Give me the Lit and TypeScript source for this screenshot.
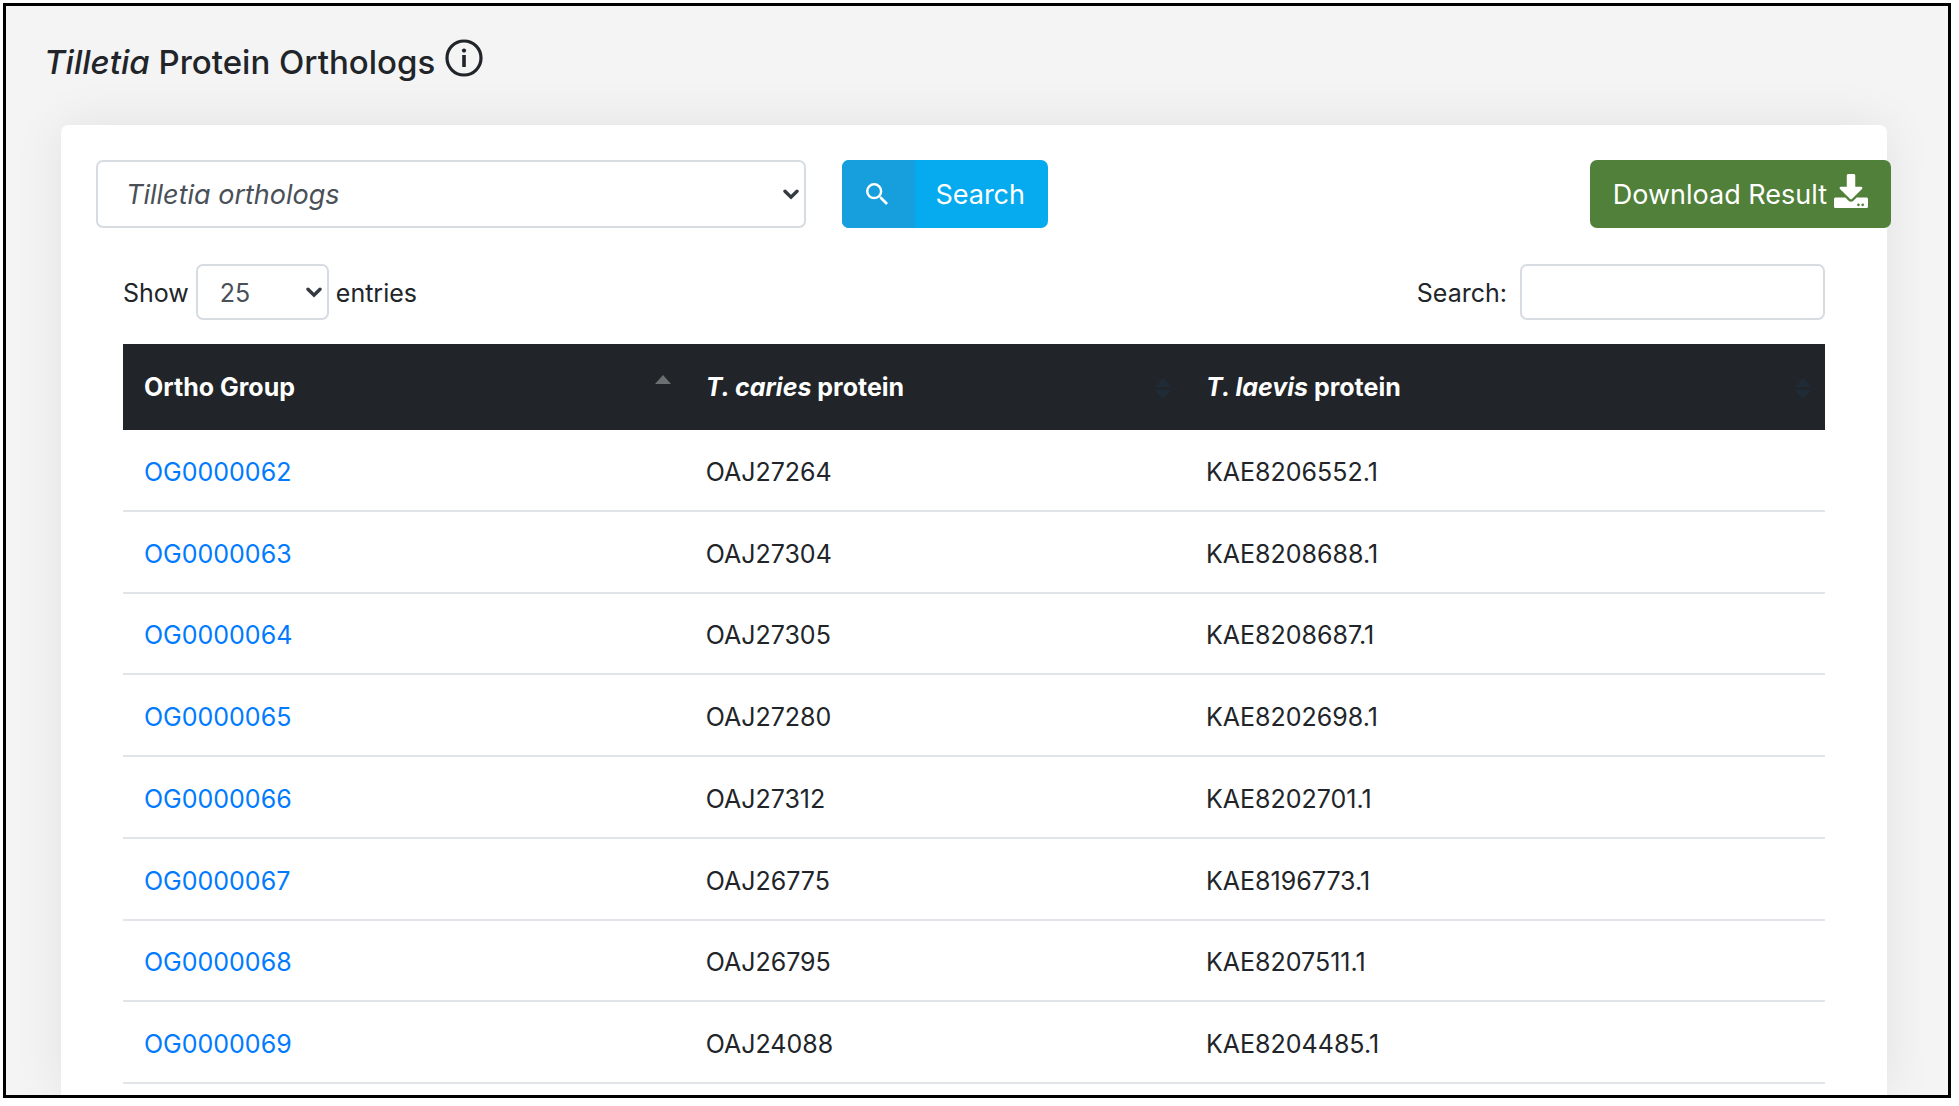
import { LitElement, html, css, svg } from "lit";
import { customElement, state } from "lit/decorators.js";

interface Ortholog {
  group: string;
  caries: string;
  laevis: string;
}

const ROWS: Ortholog[] = [
  { group: "OG0000062", caries: "OAJ27264", laevis: "KAE8206552.1" },
  { group: "OG0000063", caries: "OAJ27304", laevis: "KAE8208688.1" },
  { group: "OG0000064", caries: "OAJ27305", laevis: "KAE8208687.1" },
  { group: "OG0000065", caries: "OAJ27280", laevis: "KAE8202698.1" },
  { group: "OG0000066", caries: "OAJ27312", laevis: "KAE8202701.1" },
  { group: "OG0000067", caries: "OAJ26775", laevis: "KAE8196773.1" },
  { group: "OG0000068", caries: "OAJ26795", laevis: "KAE8207511.1" },
  { group: "OG0000069", caries: "OAJ24088", laevis: "KAE8204485.1" },
];

const chevron = html`<svg class="chevron" viewBox="0 0 16 11" width="16" height="11" aria-hidden="true">
  <path d="M2 2.2 8 8.2 14 2.2" fill="none" stroke="currentColor" stroke-width="3.4" stroke-linecap="round" stroke-linejoin="miter" />
</svg>`;

const sortIcon = (active: boolean) => html`<svg class="sort" viewBox="0 0 16 30" width="16" height="30" aria-hidden="true">
  ${active
    ? svg`<path d="M8 3 16 12H0z" fill="#6b6f72" />`
    : svg`<path d="M8 6 16 15H0zM0 18H16L8 27z" fill="#1f2c38" />`}
</svg>`;

@customElement("app-root")
export class AppRoot extends LitElement {
  @state() private filter = "";

  static styles = css`
    :host {
      display: block;
      box-sizing: border-box;
      height: 100vh;
      padding: 3px 8px 8px 3px;
      background: #fff;
      color: #212529;
      font: 400 25px/36px Inter, "Liberation Sans", sans-serif;
    }
    *, *::before, *::after { box-sizing: border-box; }
    .frame {
      display: flex;
      flex-direction: column;
      height: 100%;
      overflow: hidden;
      border: 3px solid #000;
      background: #f4f4f4;
    }
    .heading {
      display: flex;
      align-items: center;
      gap: 10px;
      margin: 0;
      padding: 32px 38px 39px;
      font-size: 33px;
      line-height: 48px;
      font-weight: 500;
    }
    .info {
      display: flex;
      margin: 0 0 8px;
      padding: 0;
      border: 0;
      background: none;
      color: inherit;
    }
    .card {
      flex: 1;
      display: flex;
      flex-direction: column;
      margin: 0 61px 0 55px;
      padding: 35px 0 11px;
      border-radius: 7px 7px 0 0;
      background: #fff;
      box-shadow: 0 0 50px rgba(0, 0, 0, 0.08);
    }
    .toolbar {
      display: grid;
      grid-template-columns: 710fr 1048fr;
      gap: 36px;
      margin: 0 -4px 36px 35px;
    }
    .actions { display: flex; justify-content: space-between; }
    .picker { display: grid; align-items: center; color: #343a40; }
    .picker > * { grid-area: 1 / 1; }
    .chevron { justify-self: end; margin-right: 7px; pointer-events: none; }
    select, input {
      margin: 0;
      border: 2px solid #d6dce2;
      border-radius: 7px;
      background: #fff;
      color: #495057;
      font: inherit;
      appearance: none;
    }
    .dataset {
      width: 100%;
      height: 68px;
      padding: 2px 28px 0;
      font-size: 27px;
      font-style: italic;
    }
    .btn {
      display: flex;
      align-items: center;
      height: 68px;
      padding: 0;
      border: 0;
      border-radius: 7px;
      overflow: hidden;
      color: #fff;
      font: inherit;
      font-size: 27px;
      white-space: nowrap;
    }
    .go { background: #05abee; }
    .go-icon {
      display: flex;
      align-items: center;
      justify-content: center;
      width: 73px;
      height: 100%;
      background: #179fdd;
    }
    .go-icon svg { margin-right: 4px; }
    .go-text { padding: 2px 23px 0 20px; }
    .download { gap: 7px; padding: 2px 23px 0; background: #508039; }
    .download svg { margin-bottom: 8px; }
    .controls {
      display: flex;
      justify-content: space-between;
      margin: 0 62px 24px;
    }
    .controls label { display: flex; align-items: center; gap: 7px; }
    .controls .find { gap: 13px; }
    .controls .caption { padding-top: 2px; }
    .length { width: 133px; height: 56px; padding: 2px 22px 0; }
    .query { width: 305px; height: 56px; padding: 0 12px; }
    .grid {
      flex: 1;
      display: flex;
      margin: 0 62px;
    }
    table {
      width: 100%;
      height: 100%;
      table-layout: fixed;
      border-spacing: 0;
    }
    .c1 { width: 33%; }
    .c2 { width: 29.4%; }
    th { height: 86px; padding: 0; background: #212529; text-align: left; }
    th button {
      display: flex;
      align-items: center;
      justify-content: space-between;
      width: 100%;
      padding: 0 14px 0 21px;
      border: 0;
      background: none;
      color: #fff;
      font: inherit;
      font-weight: 700;
      text-align: left;
    }
    td { padding: 4px 21px 0; border-bottom: 2px solid #e1e5e9; }
    a { color: #007bff; text-decoration: none; }
  `;

  private onInput(e: Event) {
    this.filter = (e.target as HTMLInputElement).value;
  }

  render() {
    const term = this.filter.toLowerCase();
    const rows = ROWS.filter((r) => `${r.group} ${r.caries} ${r.laevis}`.toLowerCase().includes(term));
    return html`
      <main class="frame">
        <h1 class="heading">
          <span><em>Tilletia</em> Protein Orthologs</span>
          <button class="info" type="button" aria-label="Information">
            <svg viewBox="0 0 38 38" width="38" height="38" fill="none" aria-hidden="true">
              <circle cx="19" cy="19" r="17" stroke="currentColor" stroke-width="3.2" />
              <circle cx="19" cy="11.6" r="2.1" fill="currentColor" />
              <path d="M19 16v12" stroke="currentColor" stroke-width="3.6" />
            </svg>
          </button>
        </h1>
        <section class="card">
          <div class="toolbar">
            <div class="picker">
              <select class="dataset" aria-label="Dataset">
                <option>Tilletia orthologs</option>
              </select>
              ${chevron}
            </div>
            <div class="actions">
              <button class="btn go" type="button">
                <span class="go-icon">
                  <svg viewBox="3 3 17.5 17.5" width="22" height="22" aria-hidden="true">
                    <path fill="#fff" d="M15.5 14h-.79l-.28-.27A6.471 6.471 0 0 0 16 9.5 6.5 6.5 0 1 0 9.5 16c1.61 0 3.09-.59 4.23-1.57l.27.28v.79l5 4.99L20.49 19l-4.99-5zm-6 0C7.01 14 5 11.99 5 9.5S7.01 5 9.5 5 14 7.01 14 9.5 11.99 14 9.5 14z" />
                  </svg>
                </span>
                <span class="go-text">Search</span>
              </button>
              <button class="btn download" type="button">
                <span>Download Result</span>
                <svg viewBox="0 0 512 512" width="34" height="34" aria-hidden="true">
                  <path fill="#fff" d="M216 0h80c13.300 0 24 10.700 24 24v168h87.700c17.800 0 26.700 21.500 14.100 34.100L269.700 378.300c-7.500 7.500-19.800 7.500-27.300 0L90.100 226.100c-12.600-12.600-3.700-34.100 14.100-34.100H192V24c0-13.300 10.700-24 24-24zm296 376v112c0 13.300-10.700 24-24 24H24c-13.300 0-24-10.700-24-24V376c0-13.300 10.700-24 24-24h146.700l49 49c20.100 20.100 52.500 20.100 72.600 0l49-49H488c13.300 0 24 10.700 24 24zm-124 88c0-11-9-20-20-20s-20 9-20 20 9 20 20 20 20-9 20-20zm64 0c0-11-9-20-20-20s-20 9-20 20 9 20 20 20 20-9 20-20z" />
                </svg>
              </button>
            </div>
          </div>
          <div class="controls">
            <label>
              <span class="caption">Show</span>
              <span class="picker">
                <select class="length">
                  <option>10</option>
                  <option selected>25</option>
                  <option>50</option>
                  <option>100</option>
                </select>
                ${chevron}
              </span>
              <span class="caption">entries</span>
            </label>
            <label class="find">
              <span class="caption">Search:</span>
              <input class="query" type="search" .value=${this.filter} @input=${this.onInput} />
            </label>
          </div>
          <div class="grid">
            <table>
              <thead>
                <tr>
                  <th class="c1" scope="col" aria-sort="ascending">
                    <button type="button"><span>Ortho Group</span>${sortIcon(true)}</button>
                  </th>
                  <th class="c2" scope="col">
                    <button type="button"><span><em>T. caries</em> protein</span>${sortIcon(false)}</button>
                  </th>
                  <th scope="col">
                    <button type="button"><span><em>T. laevis</em> protein</span>${sortIcon(false)}</button>
                  </th>
                </tr>
              </thead>
              <tbody>
                ${rows.map(
                  (r) => html`<tr>
                    <td><a href="#${r.group}">${r.group}</a></td>
                    <td>${r.caries}</td>
                    <td>${r.laevis}</td>
                  </tr>`
                )}
              </tbody>
            </table>
          </div>
        </section>
      </main>
    `;
  }
}
